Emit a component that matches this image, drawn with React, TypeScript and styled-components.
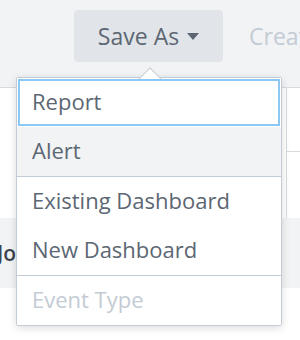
import React from "react";
import styled, { createGlobalStyle } from "styled-components";

const GlobalStyle = createGlobalStyle`
  html, body { margin: 0; padding: 0; background: #ffffff; }
  body { font-family: "Open Sans", "Liberation Sans", sans-serif; }
`;

const Page = styled.div`
  position: relative;
  width: 300px;
  height: 340px;
  overflow: hidden;
  background: #ffffff;
  display: flex;
  flex-direction: column;
`;

const Header = styled.div`
  flex: none;
  height: 88px;
  box-sizing: border-box;
  background: #f2f3f5;
  border-bottom: 1px solid #d6dbe0;
  display: flex;
  align-items: flex-start;
  padding: 10px 0 0 74px;
  white-space: nowrap;
`;

const SaveButton = styled.div`
  width: 149px;
  height: 52px;
  flex: none;
  border-radius: 4px;
  background: #e1e4e8;
  color: #5c6773;
  font-size: 23px;
  display: flex;
  align-items: center;
  justify-content: center;
  gap: 8px;
`;

const Caret = styled.span`
  width: 0;
  height: 0;
  border-left: 6px solid transparent;
  border-right: 6px solid transparent;
  border-top: 7px solid #5c6773;
  margin-top: 1px;
`;

const CreateLabel = styled.div`
  height: 52px;
  display: flex;
  align-items: center;
  margin-left: 26px;
  font-size: 23px;
  color: #c3cbd4;
`;

const ContentRow = styled.div`
  height: 130px;
  flex: none;
  display: flex;
`;

const LeftCell = styled.div`
  flex: 1;
  background: #ffffff;
`;

const RightPanel = styled.div`
  width: 13px;
  flex: none;
  border-left: 1px solid #d6dbe0;
  background: #ffffff;
`;

const RightPanelTop = styled.div`
  height: 63px;
  border-bottom: 1px solid #d6dbe0;
`;

const GrayBand = styled.div`
  height: 70px;
  flex: none;
  background: #f2f3f5;
  display: flex;
  align-items: center;
  font-size: 21px;
  font-weight: 600;
  color: #3c444d;
  overflow: hidden;
  white-space: nowrap;
`;

const BandText = styled.span`
  margin-left: -3px;
`;

const Rest = styled.div`
  flex: 1;
  background: #ffffff;
`;

const Menu = styled.div`
  position: absolute;
  left: 16px;
  top: 77px;
  width: 266px;
  box-sizing: border-box;
  background: #ffffff;
  border: 1px solid #c3cbd4;
  border-radius: 2px;
  box-shadow: 0 2px 8px rgba(0, 0, 0, 0.14);
`;

const ArrowClip = styled.div`
  position: absolute;
  left: 120px;
  top: -13px;
  width: 26px;
  height: 14px;
  overflow: hidden;
`;

const ArrowShape = styled.div`
  position: absolute;
  left: 4px;
  top: 6px;
  width: 17px;
  height: 17px;
  background: #ffffff;
  border-top: 1px solid #c3cbd4;
  border-left: 1px solid #c3cbd4;
  transform: rotate(45deg);
`;

const Section = styled.div<{ $divided?: boolean }>`
  display: flex;
  flex-direction: column;
  border-top: ${(p) => (p.$divided ? "1px solid #c3cbd4" : "none")};
`;

const Item = styled.div<{ $state?: "focus" | "hover" | "disabled" }>`
  height: 49px;
  display: flex;
  align-items: center;
  padding: 0 0 4px 15px;
  font-size: 22px;
  color: ${(p) => (p.$state === "disabled" ? "#c3cbd4" : "#5c6773")};
  background: ${(p) => (p.$state === "hover" ? "#f2f3f5" : "#ffffff")};
  outline: ${(p) => (p.$state === "focus" ? "2px solid #8cc8f6" : "none")};
  outline-offset: -3px;
  box-sizing: border-box;
  white-space: nowrap;
`;

export default function App() {
  return (
    <>
      <GlobalStyle />
      <Page>
        <Header>
          <SaveButton>
            Save As
            <Caret />
          </SaveButton>
          <CreateLabel>Create Table View</CreateLabel>
        </Header>
        <ContentRow>
          <LeftCell />
          <RightPanel>
            <RightPanelTop />
          </RightPanel>
        </ContentRow>
        <GrayBand>
          <BandText>Jo</BandText>
        </GrayBand>
        <Rest />
        <Menu>
          <ArrowClip>
            <ArrowShape />
          </ArrowClip>
          <Section>
            <Item $state="focus">Report</Item>
            <Item $state="hover">Alert</Item>
          </Section>
          <Section $divided>
            <Item>Existing Dashboard</Item>
            <Item>New Dashboard</Item>
          </Section>
          <Section $divided>
            <Item $state="disabled">Event Type</Item>
          </Section>
        </Menu>
      </Page>
    </>
  );
}
